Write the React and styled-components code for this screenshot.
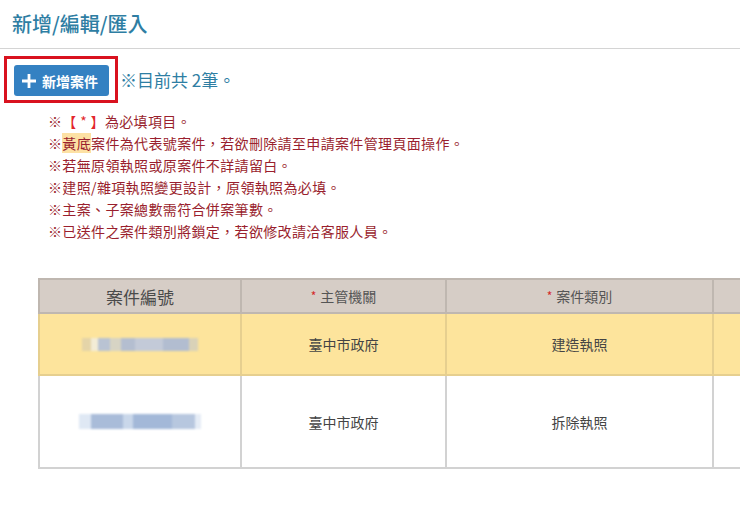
import React from 'react';
import styled, { createGlobalStyle } from 'styled-components';

const GlobalStyle = createGlobalStyle`
  body {
    margin: 0;
    background: #fff;
    font-family: "Noto Sans CJK TC", "Noto Sans", sans-serif;
  }
`;

const Page = styled.div`
  width: 740px;
  height: 505px;
  overflow: hidden;
`;

const Header = styled.div`
  height: 48px;
  border-bottom: 1px solid #d4d4d4;
  display: flex;
  align-items: center;
  padding-left: 12px;
`;

const Title = styled.h1`
  margin: 0;
  font-size: 20px;
  font-weight: 500;
  color: #2e7ea3;
  line-height: 1;
`;

const Toolbar = styled.div`
  display: flex;
  align-items: center;
  margin-top: 7px;
  padding-left: 4px;
`;

const Highlight = styled.div`
  border: 3px solid #d9121f;
  padding: 6px 6px 4px 7px;
  display: flex;
`;

const AddButton = styled.button`
  display: flex;
  align-items: center;
  gap: 5px;
  height: 31px;
  width: 95px;
  padding: 0 7px;
  border: none;
  border-radius: 3px;
  background: #3481c2;
  color: #fff;
  font-family: inherit;
  font-size: 14px;
  font-weight: 700;
  white-space: nowrap;
  cursor: pointer;
`;

const Count = styled.span`
  margin-left: 2px;
  font-size: 17px;
  color: #2e7ea3;
`;

const Notes = styled.ul`
  list-style: none;
  margin: 7px 0 0 48px;
  padding: 0;
`;

const Note = styled.li`
  font-size: 14px;
  line-height: 22px;
  letter-spacing: 0.35px;
  color: #9a1f2e;
`;

const Mark = styled.span`
  color: #e3262c;
`;

const Yellow = styled.span`
  background: #fde1a4;
`;

const TableWrap = styled.div`
  margin: 36px 0 0 38px;
  overflow: hidden;
`;

const Table = styled.table`
  border-collapse: collapse;
  table-layout: fixed;
  width: 880px;
`;

const Th = styled.th`
  box-sizing: border-box;
  height: 34px;
  padding: 0;
  width: ${p => p.$w}px;
  background: #d6cdc6;
  border: 2px solid #bfb7b0;
  font-weight: 400;
  font-size: ${p => (p.$big ? 17 : 14)}px;
  color: ${p => (p.$big ? '#4a4a4a' : '#555')};
  text-align: center;
`;

const Star = styled.span`
  color: #d42a2a;
  font-size: 12px;
  margin-right: 4px;
  vertical-align: 1px;
`;

const Row = styled.tr`
  background: ${p => (p.$yellow ? '#fde49c' : '#fff')};
  height: ${p => p.$h}px;
`;

const Td = styled.td`
  padding: 0;
  border: 2px solid ${p => (p.$yellow ? '#e6cf8f' : '#d2d2d2')};
  font-size: 14px;
  color: #444;
  text-align: center;
`;

const Blur = styled.div`
  margin: 0 auto;
  width: ${p => p.$w}px;
  height: ${p => p.$h}px;
  filter: blur(1.2px);
  background: ${p =>
    p.$yellow
      ? 'linear-gradient(90deg, #e4d4a8 0 8%, #f3ecd6 8% 14%, #b9c3d3 14% 24%, #d7d4c4 24% 34%, #b4bed0 34% 46%, #c3cad8 46% 70%, #b2bdd0 70% 92%, #d9d2b8 92%)'
      : 'linear-gradient(90deg, #dfe8f4 0 10%, #a9bcd9 10% 36%, #c9d7ea 36% 44%, #a3b8d8 44% 76%, #b7c7df 76% 95%, #e5ecf6 95%)'};
`;

const notes = [
  <>※<Mark>【 * 】</Mark>為必填項目。</>,
  <>※<Yellow>黃底</Yellow>案件為代表號案件，若欲刪除請至申請案件管理頁面操作。</>,
  <>※若無原領執照或原案件不詳請留白。</>,
  <>※建照/雜項執照變更設計，原領執照為必填。</>,
  <>※主案、子案總數需符合併案筆數。</>,
  <>※已送件之案件類別將鎖定，若欲修改請洽客服人員。</>,
];

const rows = [
  { yellow: true, h: 62, agency: '臺中市政府', type: '建造執照', bw: 116, bh: 13 },
  { yellow: false, h: 93, agency: '臺中市政府', type: '拆除執照', bw: 122, bh: 15 },
];

export default function App() {
  return (
    <Page>
      <GlobalStyle />
      <Header>
        <Title>新增/編輯/匯入</Title>
      </Header>
      <Toolbar>
        <Highlight>
          <AddButton>
            <svg width="16" height="16" viewBox="0 0 16 16">
              <path d="M8 1v14M1 8h14" stroke="#fff" strokeWidth="2.8" />
            </svg>
            新增案件
          </AddButton>
        </Highlight>
        <Count>※目前共 2筆。</Count>
      </Toolbar>
      <Notes>
        {notes.map((n, i) => (
          <Note key={i}>{n}</Note>
        ))}
      </Notes>
      <TableWrap>
        <Table>
          <thead>
            <tr>
              <Th $w={202} $big>案件編號</Th>
              <Th $w={205}><Star>*</Star>主管機關</Th>
              <Th $w={267}><Star>*</Star>案件類別</Th>
              <Th $w={206}></Th>
            </tr>
          </thead>
          <tbody>
            {rows.map((r, i) => (
              <Row key={i} $yellow={r.yellow} $h={r.h}>
                <Td $yellow={r.yellow}><Blur $w={r.bw} $h={r.bh} $yellow={r.yellow} /></Td>
                <Td $yellow={r.yellow}>{r.agency}</Td>
                <Td $yellow={r.yellow}>{r.type}</Td>
                <Td $yellow={r.yellow}></Td>
              </Row>
            ))}
          </tbody>
        </Table>
      </TableWrap>
    </Page>
  );
}
